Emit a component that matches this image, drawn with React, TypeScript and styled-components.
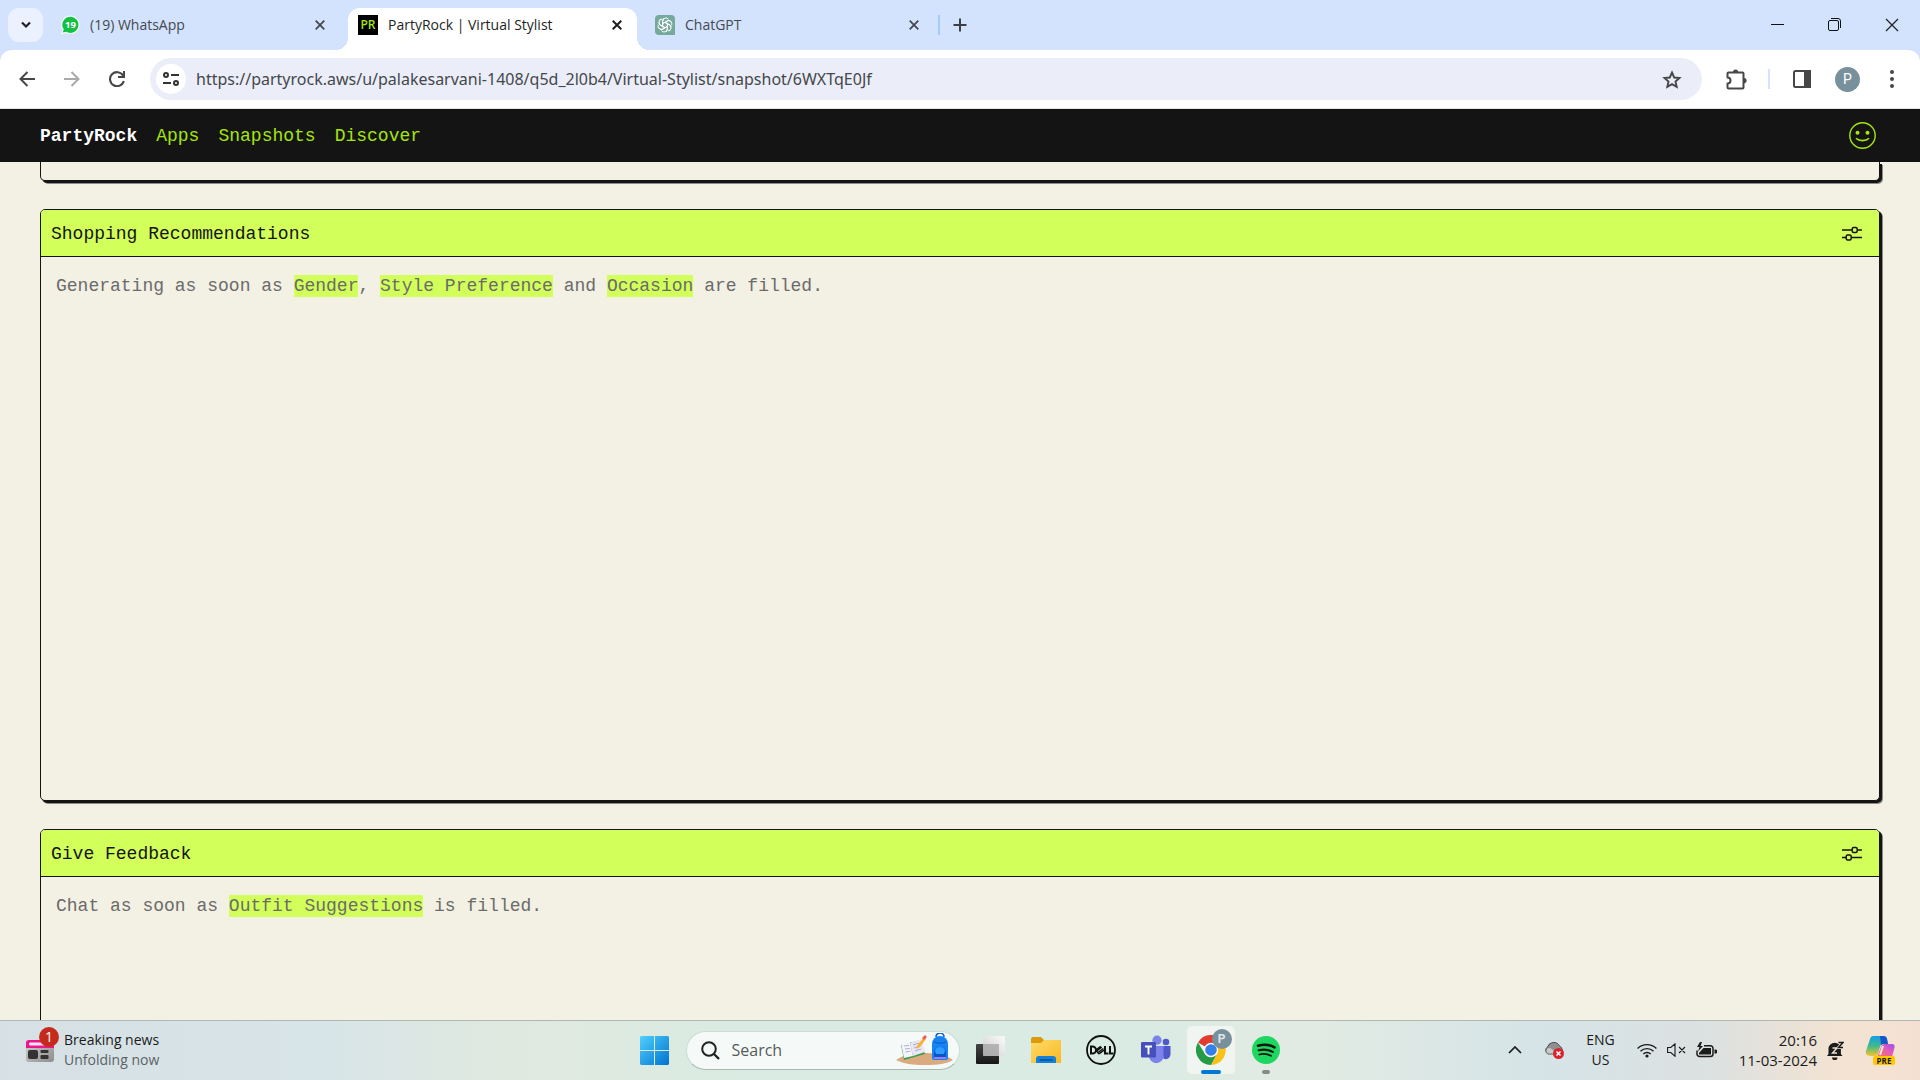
import React from "react";
import styled, { createGlobalStyle, css } from "styled-components";

const ink = "#141414";
const lime = "#d2ff5a";
const paper = "#f3f0e4";
const ui = `"Open Sans", "Noto Sans", sans-serif`;
const mono = `"Liberation Mono", "DejaVu Sans Mono", monospace`;

const GlobalStyle = createGlobalStyle`
  * { box-sizing: border-box; }
  body { margin: 0; font-family: ${ui}; background: ${paper}; }
  button { border: 0; padding: 0; margin: 0; background: none; font: inherit; color: inherit; cursor: pointer; }
  svg { display: block; flex: none; }
`;

const Screen = styled.div`
  height: 100vh;
  display: flex;
  flex-direction: column;
  overflow: hidden;
`;

/* ---------- browser frame ---------- */

const BrowserFrame = styled.header`
  background: #d3e3fd;
`;

const TabStrip = styled.div`
  height: 50px;
  display: flex;
  padding-left: 8px;
`;

const TabSearch = styled.button`
  width: 35px;
  height: 34px;
  margin: 8px 8px 0 0;
  border-radius: 11px;
  background: #ebf1fe;
  display: grid;
  place-items: center;
`;

const Tabs = styled.div`
  display: flex;
  gap: 8px;
  padding-top: 8px;
`;

const Tab = styled.div<{ $active?: boolean }>`
  position: relative;
  width: 289px;
  height: 42px;
  padding: 0 10px 8px;
  display: flex;
  align-items: center;
  gap: 10px;
  color: #45494e;
  ${(p) =>
    p.$active &&
    css`
      background: #fff;
      color: #1f1f1f;
      border-radius: 12px 12px 0 0;
      &::before,
      &::after {
        content: "";
        position: absolute;
        bottom: 0;
        width: 12px;
        height: 12px;
      }
      &::before {
        right: 100%;
        background: radial-gradient(circle at 0 0, transparent 12px, #fff 12px);
      }
      &::after {
        left: 100%;
        background: radial-gradient(circle at 100% 0, transparent 12px, #fff 12px);
      }
    `}
`;

const TabTitle = styled.span`
  flex: 1;
  font-size: 14px;
  line-height: 20px;
  white-space: nowrap;
`;

const TabClose = styled.button`
  width: 20px;
  height: 20px;
  display: grid;
  place-items: center;
`;

const PartyIcon = styled.span`
  width: 20px;
  height: 20px;
  background: #000;
  color: #a6e60a;
  font: 600 12px/20px ${ui};
  text-align: center;
`;

const StripDivider = styled.span`
  width: 2px;
  height: 20px;
  margin: 15px 0 0 4px;
  background: #a8c7fa;
`;

const NewTab = styled.button`
  width: 34px;
  height: 34px;
  margin: 8px 0 0 3px;
  display: grid;
  place-items: center;
`;

const WindowControls = styled.div`
  margin-left: auto;
  display: flex;
`;

const WindowButton = styled.button`
  width: 57px;
  height: 49px;
  display: grid;
  place-items: center;
`;

const Toolbar = styled.div`
  height: 59px;
  background: #fff;
  border-bottom: 1px solid #dfe3e6;
  border-radius: 12px 12px 0 0;
  display: flex;
  align-items: center;
  padding: 0 26px 0 10px;
`;

const NavButton = styled.button`
  width: 34px;
  height: 34px;
  margin-right: 11px;
  display: grid;
  place-items: center;
`;

const Omnibox = styled.div`
  flex: 1;
  height: 42px;
  margin-left: 5px;
  border-radius: 21px;
  background: #ebeef8;
  display: flex;
  align-items: center;
  padding: 0 20px 0 6px;
`;

const SiteInfo = styled.button`
  width: 30px;
  height: 30px;
  border-radius: 50%;
  background: #fff;
  display: grid;
  place-items: center;
`;

const Address = styled.input`
  flex: 1;
  border: 0;
  outline: 0;
  padding: 0 0 0 10px;
  background: none;
  color: #44474c;
  font: 16px/24px "Noto Sans", sans-serif;
`;

const Actions = styled.div`
  display: flex;
  align-items: center;
  margin-left: 24px;
`;

const ActionDivider = styled.span`
  width: 2px;
  height: 20px;
  margin: 0 23px 0 21px;
  background: #d3e3fd;
`;

const Avatar = styled.button`
  width: 25px;
  height: 25px;
  margin: 0 30px 0 24px;
  border-radius: 50%;
  background: #78909c;
  color: #fff;
  font: 14px/25px Roboto, sans-serif;
`;

/* ---------- site ---------- */

const SiteNav = styled.nav`
  flex: none;
  height: 53px;
  padding: 0 44px 0 40px;
  background: ${ink};
  display: flex;
  align-items: center;
  gap: 19px;
  font: 18px/24px ${mono};
`;

const SiteLink = styled.a<{ $brand?: boolean }>`
  color: ${(p) => (p.$brand ? "#fff" : "#a6e60a")};
  font-weight: ${(p) => (p.$brand ? 700 : 400)};
  text-decoration: none;
`;

const Profile = styled.button`
  margin-left: auto;
`;

const Board = styled.main`
  flex: 1;
  min-height: 0;
  overflow: hidden;
  background: ${paper};
  padding: 0 40px;
  display: flex;
  flex-direction: column;
  gap: 28px;
`;

const Card = styled.section<{ $tail?: boolean }>`
  flex: none;
  height: ${(p) => (p.$tail ? "19px" : "592px")};
  border: 1px solid ${ink};
  border-top-width: ${(p) => (p.$tail ? "0" : "1px")};
  border-radius: ${(p) => (p.$tail ? "0 0 5px 5px" : "5px")};
  box-shadow: 2px 2px 0 ${ink}, 3px 3px 0 #8c8b85;
  background: ${paper};
`;

const CardHeader = styled.header`
  height: 47px;
  padding: 2px 17px 0 10px;
  border-bottom: 1px solid ${ink};
  border-radius: 4px 4px 0 0;
  background: ${lime};
  display: flex;
  align-items: center;
  justify-content: space-between;
`;

const CardTitle = styled.h2`
  margin: 0;
  color: ${ink};
  font: 18px/24px ${mono};
`;

const CardBody = styled.p`
  margin: 0;
  padding: 17px 15px;
  color: #6b6b6b;
  font: 18px/24px ${mono};
`;

const Ref = styled.span`
  display: inline-block;
  line-height: 22px;
  background: ${lime};
`;

/* ---------- taskbar ---------- */

const Taskbar = styled.footer`
  flex: none;
  height: 60px;
  padding-bottom: 1px;
  border-top: 1px solid #b0b8b6;
  background: linear-gradient(
    90deg,
    #d6e0e5 0%,
    #d8e5e8 17%,
    #e0e9df 27%,
    #d9ebe3 40%,
    #d9ebe3 58%,
    #e2ebe3 68%,
    #d6e4e7 80%,
    #dce1e1 89%,
    #f3e3d1 96%,
    #f4e0d3 100%
  );
  display: grid;
  grid-template-columns: 1fr auto 1fr;
  align-items: center;
  color: #1b1b1b;
  font-size: 14px;
  line-height: 20px;
`;

const Widgets = styled.button`
  justify-self: start;
  display: flex;
  align-items: center;
  gap: 10px;
  padding-left: 26px;
  text-align: left;
`;

const WidgetIcon = styled.span`
  position: relative;
  width: 28px;
  height: 28px;
`;

const Badge = styled.span`
  position: absolute;
  left: 13px;
  top: -9px;
  width: 20px;
  height: 20px;
  border-radius: 50%;
  background: #c42b1c;
  color: #fff;
  text-align: center;
`;

const WidgetText = styled.span`
  display: grid;
`;

const Muted = styled.span`
  color: #5c6263;
`;

const AppRow = styled.div`
  display: flex;
  align-items: center;
  gap: 7px;
`;

const AppButton = styled.button<{ $active?: boolean }>`
  position: relative;
  width: 48px;
  height: 48px;
  border-radius: 5px;
  display: grid;
  place-items: center;
  background: ${(p) => (p.$active ? "#f0f5f2" : "none")};
`;

const Running = styled.span<{ $active?: boolean }>`
  position: absolute;
  bottom: 0;
  width: ${(p) => (p.$active ? "20px" : "8px")};
  height: 4px;
  border-radius: 2px;
  background: ${(p) => (p.$active ? "#0078d4" : "#868a88")};
`;

const ProfileDot = styled.span`
  position: absolute;
  top: 3px;
  right: 3px;
  width: 20px;
  height: 20px;
  border-radius: 50%;
  background: #78909c;
  color: #dfe6e9;
  font: 700 12px/20px Roboto, sans-serif;
`;

const SearchPill = styled.label`
  width: 274px;
  height: 39px;
  border: 1px solid #cbdcd4;
  border-bottom-color: #a9b8b1;
  border-radius: 20px;
  background: #f5faf8;
  display: flex;
  align-items: center;
  padding: 0 6px 0 14px;
  gap: 12px;
`;

const SearchInput = styled.input`
  flex: 1;
  min-width: 0;
  border: 0;
  outline: 0;
  padding: 0;
  background: none;
  font: 16px/24px ${ui};
  &::placeholder {
    color: #565c5a;
    opacity: 1;
  }
`;

const Tray = styled.div`
  justify-self: end;
  display: flex;
  align-items: center;
  gap: 22px;
  padding-right: 25px;
`;

const TrayGroup = styled.button`
  display: flex;
  align-items: center;
  gap: 10px;
`;

const Stack = styled.span<{ $align: "center" | "right" }>`
  display: grid;
  text-align: ${(p) => p.$align};
  font-size: ${(p) => (p.$align === "right" ? "15px" : "14px")};
`;

const Copilot = styled.button`
  position: relative;
`;

const PreTag = styled.span`
  position: absolute;
  left: 7px;
  bottom: 0;
  width: 22px;
  height: 9px;
  border-radius: 2px;
  background: #ffc800;
  color: #1b1b1b;
  font: 700 8px/9px ${ui};
  text-align: center;
`;

/* ---------- drawings ---------- */

const Cross = ({ size = 10, w = 2, color = "currentColor" }) => (
  <svg width={size} height={size} viewBox="0 0 10 10" stroke={color} strokeWidth={w} fill="none">
    <path d="M.7.7 9.3 9.3M9.3.7.7 9.3" />
  </svg>
);

const Sliders = () => (
  <svg width="20" height="16" viewBox="0 0 20 16" fill="none" stroke={ink} strokeWidth="1.5">
    <path d="M0 4h10M16 4h4M0 11.500h4M10 11.500h10" />
    <rect x="10.200" y="1.500" width="5" height="5" rx="1.500" />
    <rect x="4.200" y="9" width="5" height="5" rx="1.500" />
  </svg>
);

const WhatsAppIcon = () => (
  <svg width="19" height="20" viewBox="0 0 20 20">
    <path d="M10 0a9.800 9.800 0 1 1-4.800 18.500L0 20l1.500-5A9.800 9.800 0 0 1 10 0z" fill="#f4fbf6" />
    <path d="M10 1.300a8.500 8.500 0 1 1-4.500 15.800L1.900 18l1-3.400A8.500 8.500 0 0 1 10 1.300z" fill="#12c143" />
    <text x="10" y="13.500" textAnchor="middle" fontFamily="Open Sans" fontWeight="700" fontSize="10" fill="#fff">19</text>
  </svg>
);

const ChatIcon = () => (
  <svg width="20" height="20" viewBox="0 0 20 20">
    <path d="M4 0h12a4 4 0 0 1 4 4v16H4a4 4 0 0 1-4-4V4a4 4 0 0 1 4-4z" fill="#75a99b" />
    <g fill="none" stroke="#fff" strokeWidth="1">
      {[0, 60, 120, 180, 240, 300].map((a) => (
        <path key={a} transform={`rotate(${a} 10 10)`} d="M7.600 11.400V6.200a3.300 3.300 0 0 1 6-1.800M7.600 8.700l4.600-2.700a3.300 3.300 0 0 1 3 0" />
      ))}
    </g>
  </svg>
);

const WidgetDrawing = () => (
  <svg width="28" height="28" viewBox="0 0 28 28">
    <defs><linearGradient id="wd" x2="1" y2="1"><stop stopColor="#d2d2d2" /><stop offset="1" stopColor="#8d8d8d" /></linearGradient></defs>
    <rect x="0" y="4" width="28" height="22" rx="3" fill="url(#wd)" />
    <path d="M0 12V7a3 3 0 0 1 3-3h22a3 3 0 0 1 3 3v5z" fill="#f0148c" />
    <rect x="3" y="6.500" width="16" height="3" rx="1" fill="#ffe6f4" />
    <rect x="2" y="14" width="10" height="9" rx="2" fill="#333" />
    <rect x="14.500" y="14" width="8" height="3" rx="1" fill="#333" />
    <rect x="14.500" y="19" width="8" height="4" rx="1" fill="#333" />
  </svg>
);

const StartLogo = () => (
  <svg width="29" height="29" viewBox="0 0 29 29">
    <defs>
      <linearGradient id="win" x1="0" y1="0" x2="1" y2="1" gradientUnits="objectBoundingBox">
        <stop offset="0" stopColor="#50d0fd" />
        <stop offset="1" stopColor="#0072d0" />
      </linearGradient>
    </defs>
    <path d="M1 0h13v14H0V1zM15 0h13l1 1v13H15zM0 15h14v14H1l-1-1zM15 15h14v13l-1 1H15z" fill="url(#win)" />
  </svg>
);

const SearchArt = () => (
  <svg width="57" height="34" viewBox="0 0 57 34">
    <path d="M0 27c8-5 14-7 26-7s23 1 31 7c-6 4-15 5-28 5S8 31 0 27z" fill="#d9ab7f" />
    <path d="M5 12 8 27l21-6-4-14z" fill="#3f9a4f" />
    <path d="m5 10 9 0 3 13-9 2z" fill="#f6f4fb" />
    <path d="m14 10 11-4 4 13-12 4z" fill="#e9e6f5" />
    <path d="m8 13 5-.5M9 16l5-.6M9.500 19l5-.8M17 12l6-2M18 15l6-2M19 18l6-2" stroke="#a9a4c6" strokeWidth=".9" />
    <path d="m21 13 7-9 2 2-6 8-4 2z" fill="#f7b32b" />
    <path d="m26 5 3-3 2 2-3 3z" fill="#ef5a5a" />
    <path d="M40 4a4 4 0 0 1 8 0" fill="none" stroke="#0e61c9" strokeWidth="1.600" />
    <path d="M36 11a8 8 0 0 1 16 0v14a2 2 0 0 1-2 2H38a2 2 0 0 1-2-2z" fill="#1583f2" />
    <path d="M38 19a6 5 0 0 1 12 0v6H38z" fill="#0a56c4" />
    <path d="M39 18a5 4 0 0 1 10 0l-1 3h-8z" fill="#2f9bff" />
    <path d="M38 25h12" stroke="#a07bf0" strokeWidth="2" />
    <path d="M38 9c3 1.500 9 1.500 12 0" stroke="#0a56c4" fill="none" />
  </svg>
);

const TaskViewIcon = () => (
  <svg width="30" height="30" viewBox="0 0 30 30">
    <defs>
      <linearGradient id="tv" x2="0" y2="1"><stop stopColor="#454545" /><stop offset="1" stopColor="#161616" /></linearGradient>
      <linearGradient id="tw" x1="1" x2="0" y2="1"><stop stopColor="#fff" /><stop offset="1" stopColor="#c8c8c8" /></linearGradient>
    </defs>
    <rect x="0" y="9" width="23" height="20" rx="1" fill="url(#tv)" />
    <rect x="7" y="1" width="22" height="20" rx="1" fill="url(#tw)" opacity=".85" />
    <path d="M7 9h16v12H8l-1-1z" fill="#a9a9a9" opacity=".7" />
  </svg>
);

const FolderIcon = () => (
  <svg width="30" height="30" viewBox="0 0 30 30">
    <defs><linearGradient id="fo" x2="1" y2="1"><stop stopColor="#ffdb6b" /><stop offset="1" stopColor="#f9b820" /></linearGradient></defs>
    <path d="M0 4a2 2 0 0 1 2-2h8l3 3h15a2 2 0 0 1 2 2v3H0z" fill="#dc9a0b" />
    <path d="M0 8h10l3-3h15a2 2 0 0 1 2 2v21H0z" fill="url(#fo)" />
    <path d="M5 28v-4a3 3 0 0 1 3-3h14a3 3 0 0 1 3 3v4z" fill="#1580d8" />
    <path d="M9 25h12" stroke="#0a4d92" strokeWidth="1.500" strokeLinecap="round" />
  </svg>
);

const DellIcon = () => (
  <svg width="30" height="30" viewBox="0 0 30 30" fill="none" stroke="#111">
    <circle cx="15" cy="15" r="14" strokeWidth="1.800" />
    <path strokeWidth="2" d="M5 11.500h1.500a3.300 3.300 0 0 1 0 7H5zM19 11v7.500h3.500M24 11v7.500h3.500" />
    <path strokeWidth="1.500" d="m9.800 15 5-3.700M10.300 16.200l5.400-4M12 17.500l5.400-4M13 18.900l5-3.700M9.800 15l3.200 3.900" />
  </svg>
);

const TeamsIcon = () => (
  <svg width="30" height="30" viewBox="0 0 30 30">
    <circle cx="25" cy="7" r="3.300" fill="#5059c9" />
    <path d="M20 11h9.500v8.500a5 5 0 0 1-7 4.300z" fill="#5059c9" />
    <circle cx="16" cy="5.200" r="4.600" fill="#7b83eb" />
    <path d="M8 11h14.500v10a7.200 7.200 0 0 1-14.500 0z" fill="#7b83eb" />
    <rect x="0" y="7" width="15" height="15.500" rx="1.300" fill="#4650b8" />
    <path d="M4 11.500h7M7.500 11.500v8" stroke="#fff" strokeWidth="1.900" />
  </svg>
);

const ChromeIcon = () => (
  <svg width="30" height="30" viewBox="0 0 30 30">
    <path d="M15 15 2 7.500A15 15 0 0 1 28 7.500z" fill="#e33b2e" />
    <path d="M15 8h13a15 15 0 0 1-13 22l6-11.500z" fill="#fbc116" />
    <path d="M2 7.500 9 19a7 7 0 0 0 12-.5L15 30A15 15 0 0 1 2 7.500z" fill="#259b4a" />
    <circle cx="15" cy="15" r="7.200" fill="#fff" />
    <circle cx="15" cy="15" r="5.800" fill="#357fe8" />
  </svg>
);

const SpotifyIcon = () => (
  <svg width="28" height="28" viewBox="0 0 28 28" fill="none" stroke="#10180f" strokeLinecap="round">
    <circle cx="14" cy="14" r="14" fill="#1ed760" stroke="none" />
    <path d="M6 9.700c5.500-1.600 12-1 16.500 1.600" strokeWidth="2.600" />
    <path d="M6.700 14.300c5-1.400 10-.7 14 1.600" strokeWidth="2.200" />
    <path d="M7.300 18.500c4.300-1.200 8.300-.6 11.700 1.300" strokeWidth="1.800" />
  </svg>
);

const CopilotIcon = () => (
  <svg width="29" height="29" viewBox="0 0 29 29">
    <defs>
      <linearGradient id="c1" x2="0" y2="1"><stop stopColor="#149de8" /><stop offset=".5" stopColor="#3fb98c" /><stop offset="1" stopColor="#f2c52e" /></linearGradient>
      <linearGradient id="c2" x1="1" x2="0" y2="1"><stop stopColor="#a04df0" /><stop offset=".5" stopColor="#e75fae" /><stop offset="1" stopColor="#f87a4e" /></linearGradient>
    </defs>
    <path d="M8 0h9a4 4 0 0 1 4 3l1 5h-4a4 4 0 0 0-4 3l-2 6c-.5 2-1 3-3 3H4c-3 0-5-2-4-5L4 3a4 4 0 0 1 4-3z" fill="url(#c1)" />
    <path d="M14 0h3a4 4 0 0 1 4 3l1 5h-4a4 4 0 0 0-3 1z" fill="#1656c8" />
    <path d="M18 8h8c2 0 3 1.500 2.500 3.500L26 21H11l4-10a4 4 0 0 1 3-3z" fill="url(#c2)" />
    <path d="m14 19 3-9" stroke="#fbe9df" strokeWidth="2" />
  </svg>
);

export default function App() {
  return (
    <Screen>
      <GlobalStyle />
      <BrowserFrame>
        <TabStrip>
          <TabSearch aria-label="Search tabs">
            <svg width="10" height="8" viewBox="0 0 10 8" fill="none" stroke="#1f1f1f" strokeWidth="2.200"><path d="m1 1.500 4 4 4-4" /></svg>
          </TabSearch>
          <Tabs>
            <Tab>
              <WhatsAppIcon />
              <TabTitle>(19) WhatsApp</TabTitle>
              <TabClose aria-label="Close tab"><Cross w={1.8} /></TabClose>
            </Tab>
            <Tab $active>
              <PartyIcon>PR</PartyIcon>
              <TabTitle>PartyRock | Virtual Stylist</TabTitle>
              <TabClose aria-label="Close tab"><Cross /></TabClose>
            </Tab>
            <Tab>
              <ChatIcon />
              <TabTitle>ChatGPT</TabTitle>
              <TabClose aria-label="Close tab"><Cross w={1.8} /></TabClose>
            </Tab>
          </Tabs>
          <StripDivider />
          <NewTab aria-label="New tab">
            <svg width="14" height="14" viewBox="0 0 14 14" stroke="#3c4043" strokeWidth="2"><path d="M7 .5v13M.5 7h13" /></svg>
          </NewTab>
          <WindowControls>
            <WindowButton aria-label="Minimize">
              <svg width="13" height="13" viewBox="0 0 13 13" stroke="#111"><path d="M0 6.500h13" /></svg>
            </WindowButton>
            <WindowButton aria-label="Restore">
              <svg width="13" height="13" viewBox="0 0 13 13" fill="none" stroke="#111">
                <rect x=".5" y="2.500" width="10" height="10" rx="1.500" />
                <path d="M3 .5h7a2.500 2.500 0 0 1 2.500 2.500v7" />
              </svg>
            </WindowButton>
            <WindowButton aria-label="Close"><Cross size={14} w={0.9} color="#222" /></WindowButton>
          </WindowControls>
        </TabStrip>
        <Toolbar>
          <NavButton aria-label="Back">
            <svg width="16" height="16" viewBox="0 0 16 16" fill="none" stroke="#474747" strokeWidth="2"><path d="M16 8H1.500M8.500 1 1.500 8l7 7" /></svg>
          </NavButton>
          <NavButton aria-label="Forward">
            <svg width="16" height="16" viewBox="0 0 16 16" fill="none" stroke="#a9a9a9" strokeWidth="2"><path d="M0 8h14.500M7.500 1l7 7-7 7" /></svg>
          </NavButton>
          <NavButton aria-label="Reload">
            <svg width="16" height="16" viewBox="0 0 16 16" fill="none" stroke="#474747" strokeWidth="2.100"><path d="M14.800 10A7 7 0 1 1 14 4.500M15 0v6H9" /></svg>
          </NavButton>
          <Omnibox>
            <SiteInfo aria-label="View site information">
              <svg width="16" height="14" viewBox="0 0 16 14" fill="none" stroke="#333" strokeWidth="2">
                <circle cx="3" cy="3" r="2" /><path d="M8 3h8M0 11h8" /><circle cx="13" cy="11" r="2" />
              </svg>
            </SiteInfo>
            <Address aria-label="Address" defaultValue="https://partyrock.aws/u/palakesarvani-1408/q5d_2l0b4/Virtual-Stylist/snapshot/6WXTqE0Jf" />
            <button aria-label="Bookmark this tab">
              <svg width="20" height="19" viewBox="0 0 20 19" fill="none" stroke="#474747" strokeWidth="1.900">
                <path d="m10 2.500 2.200 5 5.300.5-4 3.600 1.200 5.300-4.700-2.800-4.700 2.800 1.200-5.300-4-3.600 5.300-.5z" />
              </svg>
            </button>
          </Omnibox>
          <Actions>
            <button aria-label="Extensions">
              <svg width="21" height="21" viewBox="0 0 21 21">
                <path d="M3 3.500h13.500a1 1 0 0 1 1 1v14a1 1 0 0 1-1 1H2.500a1 1 0 0 1-1-1v-4a3 3 0 0 0 0-6v-4a1 1 0 0 1 1-1z" fill="none" stroke="#474747" strokeWidth="2" strokeLinejoin="round" />
                <path d="M7 3a2.600 2.600 0 0 1 5.200 0zM18 9a2.600 2.600 0 0 1 0 5.200z" fill="#474747" />
              </svg>
            </button>
            <ActionDivider />
            <button aria-label="Side panel">
              <svg width="18" height="18" viewBox="0 0 18 18" fill="none" stroke="#474747" strokeWidth="2"><rect x="1" y="1" width="16" height="16" rx="1.500" /><path d="M12 1h5v16h-5z" fill="#474747" /></svg>
            </button>
            <Avatar aria-label="Profile">P</Avatar>
            <button aria-label="Menu">
              <svg width="4" height="18" viewBox="0 0 4 18" fill="#474747"><circle cx="2" cy="2" r="2" /><circle cx="2" cy="9" r="2" /><circle cx="2" cy="16" r="2" /></svg>
            </button>
          </Actions>
        </Toolbar>
      </BrowserFrame>

      <SiteNav>
        <SiteLink $brand href="#home">PartyRock</SiteLink>
        <SiteLink href="#apps">Apps</SiteLink>
        <SiteLink href="#snapshots">Snapshots</SiteLink>
        <SiteLink href="#discover">Discover</SiteLink>
        <Profile aria-label="Account">
          <svg width="27" height="27" viewBox="0 0 27 27" fill="none" stroke="#a6e60a" strokeWidth="1.400">
            <circle cx="13.500" cy="13.500" r="12.700" />
            <circle cx="8.500" cy="10.800" r="2" fill="#a6e60a" stroke="none" />
            <circle cx="18.500" cy="10.800" r="2" fill="#a6e60a" stroke="none" />
            <path d="M7 16.200c3 3.200 10 3.200 13 0" strokeWidth="1.600" />
          </svg>
        </Profile>
      </SiteNav>

      <Board>
        <Card $tail />
        <Card>
          <CardHeader>
            <CardTitle>Shopping Recommendations</CardTitle>
            <button aria-label="Edit Shopping Recommendations"><Sliders /></button>
          </CardHeader>
          <CardBody>
            Generating as soon as <Ref>Gender</Ref>, <Ref>Style Preference</Ref> and <Ref>Occasion</Ref> are filled.
          </CardBody>
        </Card>
        <Card>
          <CardHeader>
            <CardTitle>Give Feedback</CardTitle>
            <button aria-label="Edit Give Feedback"><Sliders /></button>
          </CardHeader>
          <CardBody>
            Chat as soon as <Ref>Outfit Suggestions</Ref> is filled.
          </CardBody>
        </Card>
      </Board>

      <Taskbar>
        <Widgets>
          <WidgetIcon><WidgetDrawing /><Badge>1</Badge></WidgetIcon>
          <WidgetText>
            <span>Breaking news</span>
            <Muted>Unfolding now</Muted>
          </WidgetText>
        </Widgets>
        <AppRow>
          <AppButton aria-label="Start"><StartLogo /></AppButton>
          <SearchPill>
            <svg width="19" height="19" viewBox="0 0 19 19" fill="none" stroke="#222" strokeWidth="2"><circle cx="8" cy="8" r="6.800" /><path d="m13 13 5 5" strokeWidth="2.400" /></svg>
            <SearchInput aria-label="Search" placeholder="Search" />
            <SearchArt />
          </SearchPill>
          <AppButton aria-label="Task view"><TaskViewIcon /></AppButton>
          <AppButton aria-label="File Explorer"><FolderIcon /></AppButton>
          <AppButton aria-label="Dell"><DellIcon /></AppButton>
          <AppButton aria-label="Teams"><TeamsIcon /></AppButton>
          <AppButton $active aria-label="Chrome"><ChromeIcon /><ProfileDot>P</ProfileDot><Running $active /></AppButton>
          <AppButton aria-label="Spotify"><SpotifyIcon /><Running /></AppButton>
        </AppRow>
        <Tray>
          <button aria-label="Show hidden icons">
            <svg width="14" height="8" viewBox="0 0 14 8" fill="none" stroke="#1b1b1b" strokeWidth="1.700"><path d="m1 7 6-6 6 6" /></svg>
          </button>
          <button aria-label="OneDrive">
            <svg width="20" height="18" viewBox="0 0 20 18">
              <path d="M4 13a4 4 0 0 1-.5-7A6.500 6.500 0 0 1 15.500 5 4.500 4.500 0 0 1 16 13z" fill="#8f8f8f" stroke="#4d4d4d" />
              <path d="M3.500 12.500a3.500 3.500 0 0 1 1-5.500c3-.5 5 3 9 5.500z" fill="#c9c9c9" />
              <circle cx="14.500" cy="12.500" r="5.500" fill="#d9242f" />
              <path d="m12.500 10.500 4 4m0-4-4 4" stroke="#fff" strokeWidth="1.500" />
            </svg>
          </button>
          <button><Stack $align="center"><span>ENG</span><span>US</span></Stack></button>
          <TrayGroup aria-label="Network, sound and battery">
            <svg width="20" height="15" viewBox="0 0 20 15" fill="none" stroke="#1b1b1b" strokeWidth="1.400">
              <path d="M.6 5.500a13.300 13.300 0 0 1 18.800 0M3.500 8.300a9.200 9.200 0 0 1 13 0M6.300 11a5.200 5.200 0 0 1 7.400 0" />
              <circle cx="10" cy="13" r="1.600" fill="#1b1b1b" stroke="none" />
            </svg>
            <svg width="19" height="14" viewBox="0 0 19 14" fill="none" stroke="#1b1b1b" strokeWidth="1.100"><path d="M.6 4.500h3.200L8 .8v12.400L3.800 9.500H.6zM12 4l6 6m0-6-6 6" /></svg>
            <svg width="21" height="16" viewBox="0 0 21 16">
              <path d="M8 3.800h6.500a2.500 2.500 0 0 1 2.500 2.500v5.700a2.500 2.500 0 0 1-2.500 2.500h-11A2.500 2.500 0 0 1 1 12V8.500" fill="none" stroke="#1b1b1b" strokeWidth="1.500" />
              <path d="M7.500 6H15v6.500H3V11zM18.500 7.500h1a1.200 1.200 0 0 1 0 4h-1zM4 0 1 5h2.500L2 9.500 7 4H4.500L6 0z" fill="#1b1b1b" />
            </svg>
          </TrayGroup>
          <TrayGroup>
            <Stack $align="right"><span>20:16</span><span>11-03-2024</span></Stack>
            <svg width="17" height="19" viewBox="0 0 17 19" fill="#1b1b1b">
              <path d="M1.500 8a6.200 6.200 0 0 1 12.400 0v5l1.600 2H0l1.500-2zM5 16.500h5.500a2.700 2.700 0 0 1-5.500 0z" />
              <path d="M5.500 7h4.500l-4.500 5h4.500" fill="none" stroke="#f0e2d2" strokeWidth="1.400" />
              <path d="M11.500 1.500h4.500l-4.500 5h4.500" fill="none" stroke="#ecdfd2" strokeWidth="3" />
              <path d="M11.500 1.500h4.500l-4.500 5h4.500" fill="none" stroke="#1b1b1b" strokeWidth="1.500" />
            </svg>
          </TrayGroup>
          <Copilot aria-label="Copilot"><CopilotIcon /><PreTag>PRE</PreTag></Copilot>
        </Tray>
      </Taskbar>
    </Screen>
  );
}
